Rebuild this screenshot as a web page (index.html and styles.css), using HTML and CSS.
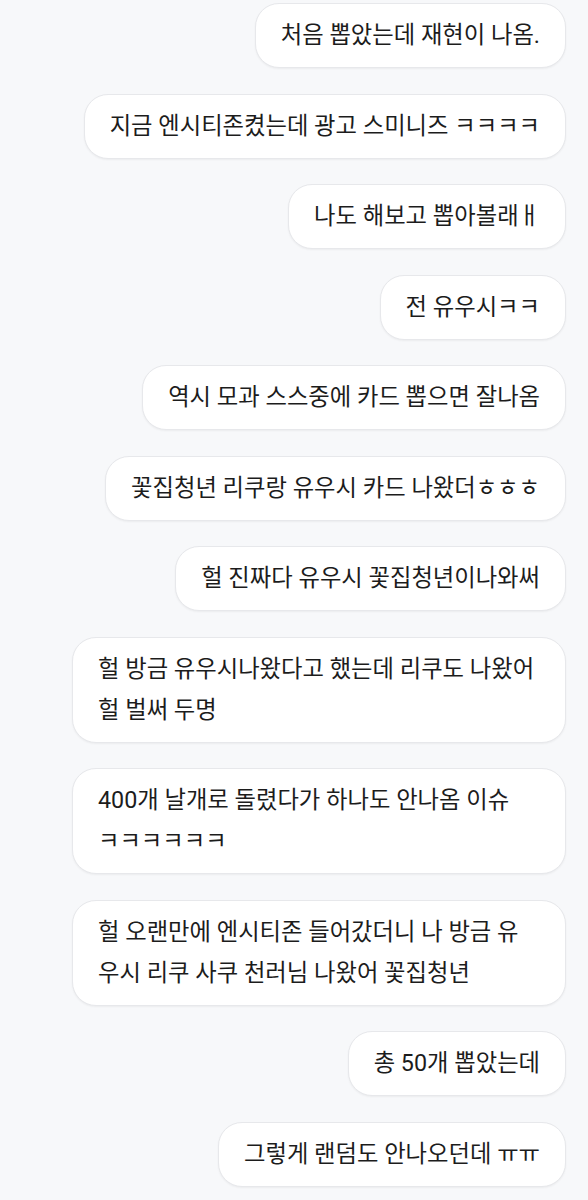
FILE: index.html
```html
<!DOCTYPE html>
<html lang="ko">
<head>
    <meta charset="UTF-8">
    <meta name="viewport" content="width=device-width, initial-scale=1.0">
    <title>채팅</title>
    <link rel="stylesheet" href="styles.css">
</head>
<body>

    <!-- Message list -->
    <div class="chat">
        <div class="bubble">처음 뽑았는데 재현이 나옴.</div>
        <div class="bubble">지금 엔시티존켰는데 광고 스미니즈 ㅋㅋㅋㅋ</div>
        <div class="bubble">나도 해보고 뽑아볼래ㅐ</div>
        <div class="bubble">전 유우시ㅋㅋ</div>
        <div class="bubble">역시 모과 스스중에 카드 뽑으면 잘나옴</div>
        <div class="bubble">꽃집청년 리쿠랑 유우시 카드 나왔더ㅎㅎㅎ</div>
        <div class="bubble">헐 진짜다 유우시 꽃집청년이나와써</div>
        <div class="bubble bubble-wide">헐 방금 유우시나왔다고 했는데 리쿠도 나왔어<br>헐 벌써 두명</div>
        <div class="bubble bubble-wide">400개 날개로 돌렸다가 하나도 안나옴 이슈<br>ㅋㅋㅋㅋㅋㅋ</div>
        <div class="bubble bubble-wide">헐 오랜만에 엔시티존 들어갔더니 나 방금 유<br>우시 리쿠 사쿠 천러님 나왔어 꽃집청년</div>
        <div class="bubble">총 50개 뽑았는데</div>
        <div class="bubble">그렇게 랜덤도 안나오던데 ㅠㅠ</div>
    </div>

</body>
</html>
```

FILE: styles.css
```css
/* General Reset */
* {
    margin: 0;
    padding: 0;
    box-sizing: border-box;
}

body {
    font-family: Roboto, "Noto Sans CJK KR", sans-serif;
    background-color: #f7f8fa;
    color: #1c1c1c;
}

/* Message list */
.chat {
    display: flex;
    flex-direction: column;
    align-items: flex-end;
    gap: 25.5px;
    padding: 3px 22px 12px 0;
}

.bubble {
    background-color: #fff;
    border: 1px solid #e7e8eb;
    border-radius: 24px;
    box-shadow: 0 1px 2px rgba(0, 0, 0, 0.05);
    padding: 11px 25px;
    max-width: 494px;
    font-size: 23.3px;
    line-height: 41px;
}

.bubble-wide {
    width: 494px;
}
```
